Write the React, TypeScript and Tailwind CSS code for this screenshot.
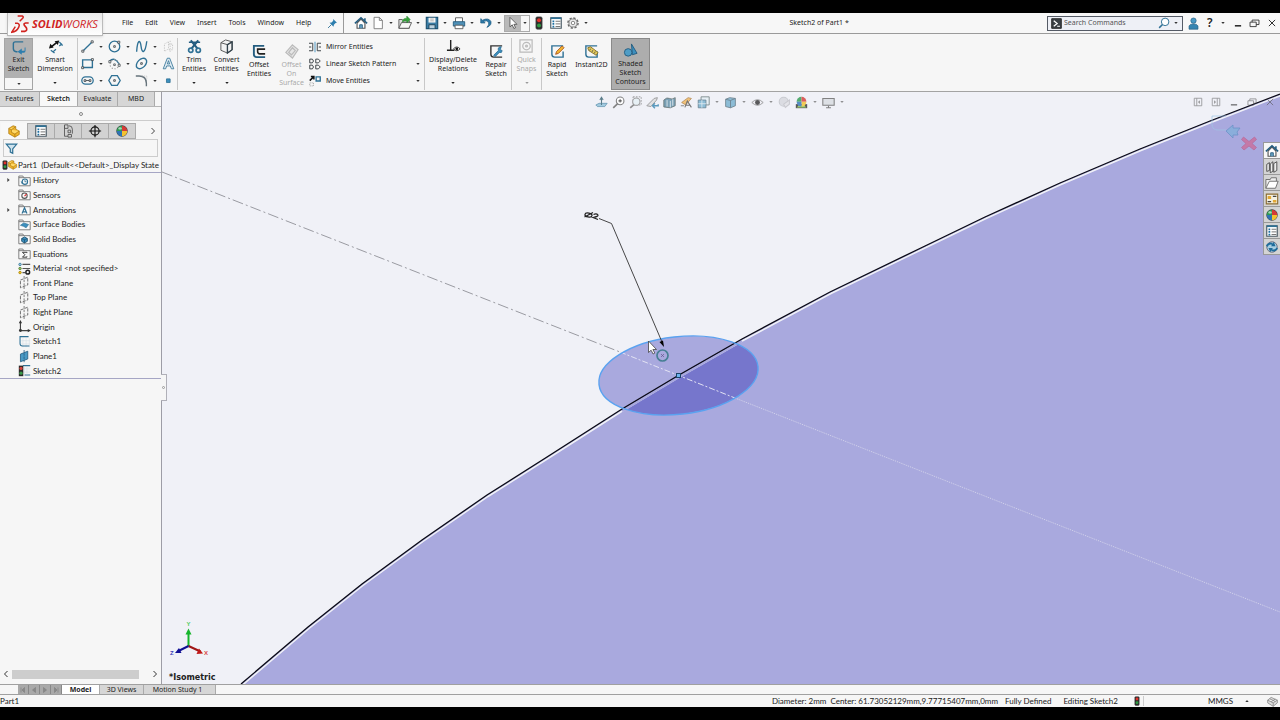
import React from "react";
import type { ReactNode } from "react";

const BLUE = "#2f7195";
const DARK = "#3c4347";

function Ico({ children, className = "size-4", vb = "0 0 16 16" }: { children: ReactNode; className?: string; vb?: string }) {
  return (
    <svg viewBox={vb} className={`shrink-0 ${className}`} fill="none" stroke={BLUE} strokeWidth="1.3" aria-hidden="true">
      {children}
    </svg>
  );
}

function Caret({ className = "text-[#333]", up = false }: { className?: string; up?: boolean }) {
  return (
    <svg viewBox="0 0 5 3" className={`h-[2px] w-1 shrink-0 ${className}`} fill="currentColor" aria-hidden="true">
      <path d={up ? "M0 3h5L2.500 0z" : "M0 0h5L2.500 3z"} />
    </svg>
  );
}

/* ---------- shared drawings ---------- */

const HomeIcon = () => (
  <Ico className="size-[14px]">
    <path d="M3.500 8v6h9V8L8 3.500z" fill="#fff" stroke="#555" />
    <path d="M1 8.500 8 2l7 6.500M12.500 2.500v3" stroke="#245d80" strokeWidth="1.800" />
    <path d="M6.500 14v-4h3v4" fill="#6ba4c4" stroke="#245d80" strokeWidth="1" />
  </Ico>
);
const Ball = ({ className = "size-[14px]" }: { className?: string }) => (
  <Ico className={className}>
    <g stroke="none">
      <circle cx="8" cy="8" r="6.500" fill="#3a3f44" />
      <path d="M8 8V2a6 6 0 0 0-6 6z" fill="#2c9c50" />
      <path d="M8 8V2a6 6 0 0 1 6 6z" fill="#d63a36" />
      <path d="M8 8h6a6 6 0 0 1-6 6z" fill="#f2c230" />
      <path d="M8 8v6a6 6 0 0 1-6-6z" fill="#2f74b5" />
      <ellipse cx="5.800" cy="5" rx="2" ry="1.400" fill="#fff" opacity=".6" />
    </g>
  </Ico>
);
const ListIcon = () => (
  <Ico className="size-[14px]">
    <path d="M2 2h12v12H2z" fill="#fff" stroke="#4a5a64" />
    <path d="M2 2.500h12" stroke={BLUE} strokeWidth="2" />
    <path d="M4 6h2M4 9h2M4 12h2" stroke="#1d6ea0" strokeWidth="2" />
    <path d="M7.500 6H13M7.500 9H13M7.500 12H13" stroke="#666" strokeWidth="1" />
  </Ico>
);
const Traffic = ({ className = "size-[14px]" }: { className?: string }) => (
  <Ico className={className}>
    <rect x="4.500" y="1" width="7" height="14" rx="1.500" fill="#2a2a2a" stroke="#444" strokeWidth=".8" />
    <circle cx="8" cy="4.800" r="2.300" fill="#e0332c" stroke="none" />
    <circle cx="8" cy="10.800" r="2.300" fill="#2f9a42" stroke="none" />
  </Ico>
);
const PartIcon = ({ className = "size-[14px]" }: { className?: string }) => (
  <Ico className={className}>
    <g stroke="#a8740c" strokeWidth=".8">
      <path d="M2 5l5-3 3 1v3l4 2v4l-5 3-7-4z" fill="#f0b429" />
      <path d="M2 5l3 1.500L10 3M5 6.500v3l4 2 5-3.500M9 11.500V15" fill="#ffd867" />
    </g>
  </Ico>
);
const SketchIcon = ({ className = "size-4" }: { className?: string }) => (
  <Ico className={className}>
    <path d="M6 4v11M10 4v11M14 4v11M4 7h11M4 11h11" stroke="#d4dfe6" strokeWidth=".7" />
    <path d="M13 2H2.500v8.500q0 3 3 3H14" />
  </Ico>
);

/* ---------- menu bar ---------- */

const quick: { name: string; icon: ReactNode }[] = [
  {
    name: "New",
    icon: <Ico className="size-[14px]"><path d="M3.500 1.500h6l3.500 3.500v9.500h-9.500zM9.500 1.500V5H13" fill="#fff" stroke="#777" strokeWidth="1" /></Ico>,
  },
  {
    name: "Open",
    icon: (
      <Ico className="size-[14px]">
        <path d="M1 14V4h4l1 1.500h7V14z" fill="#ddd" stroke="#555" strokeWidth="1" />
        <path d="M1 14 4 7.500h11.500L12.500 14z" fill="#f7f7f7" stroke="#555" strokeWidth="1" />
        <path d="M5 7q0-4.500 5-4.500V0l4 4-4 4V5.500Q6.500 5.500 5 7z" fill="#38a33c" stroke="#1f7a27" strokeWidth=".5" />
      </Ico>
    ),
  },
  {
    name: "Save",
    icon: (
      <Ico className="size-[14px]">
        <path d="M1.500 1.500h13v13h-13z" fill="#3b7ea6" stroke="#1d5272" />
        <path d="M4 2h8v5.500H4z" fill="#f4f4f4" stroke="none" />
        <path d="M4.500 14v-4h7v4" fill="#bcd2df" stroke="#1d3f55" strokeWidth="1" />
        <path d="M6 3.500h4M6 5.500h4" stroke="#999" strokeWidth=".8" />
      </Ico>
    ),
  },
  {
    name: "Print",
    icon: (
      <Ico className="size-[14px]">
        <path d="M4 7V2h8v5" fill="#fff" stroke="#555" strokeWidth="1" />
        <path d="M1.500 6.500h13v5h-13z" fill="#4f91b8" stroke="#255c7e" strokeWidth="1" />
        <path d="M3.500 10.500h9v4h-9z" fill="#fff" stroke="#555" strokeWidth="1" />
      </Ico>
    ),
  },
  {
    name: "Undo",
    icon: <Ico className="size-[14px]"><path d="M2 3v5h5L5.300 6.200q3.700-2 5.700 1.300Q12 10 9 13q6-2.500 4.500-7Q10.500 1.500 4 4.800z" fill="#2d79a8" stroke="#1d5b83" strokeWidth=".8" /></Ico>,
  },
];

function MenuBar() {
  return (
    <header className="relative z-10 flex h-[21px] shrink-0 items-center border-b border-[#9a9a9a] bg-[#f7f7f7] pl-[116px]">
      <div className="absolute top-0 left-[7px] flex h-[23px] w-24 items-center border border-t-0 border-[#bbb] bg-gradient-to-b from-[#e9e9e9] to-white px-[3px] shadow-sm">
        <svg viewBox="0 0 54 60" className="h-5 w-[18px] shrink-0" fill="none" stroke="#d1231f" strokeWidth="5" aria-hidden="true">
          <path d="M20 6h14q5 2 1 7l-9 9" strokeWidth="4.500" />
          <path d="M12 28h7q9 2 4 12-6 13-21 15L13 38" strokeWidth="4.500" />
          <path d="M53 27h-9q-7 1-4 7l6 7q4 9-5 11H30" />
        </svg>
        <span className="ml-[3px] font-['Open_Sans',sans-serif] text-[11px] text-[#d1231f] italic"><b>SOLID</b>WORKS</span>
      </div>
      <nav className="flex">
        {["File", "Edit", "View", "Insert", "Tools", "Window", "Help"].map((m) => (
          <button key={m} className="px-[6px]">{m}</button>
        ))}
      </nav>
      <button aria-label="Pin menu" className="ml-[10px]">
        <Ico className="size-[11px]"><path d="m9 1.500 5.500 5.500-2 .3-2.500 2.500-.5 3L3.700 7l3-.5L9 4z" fill="#2d7eae" stroke="none" /><path d="m6.500 9.500-5 5" /></Ico>
      </button>
      <div className="ml-[5px] h-5 w-px bg-[#9a9a9a]" />
      <button aria-label="Home" className="ml-2 flex w-[17px] justify-center"><HomeIcon /></button>
      {quick.map((q) => (
        <button key={q.name} aria-label={q.name} className="flex w-[27px] items-center gap-1 pl-[2px]">
          {q.icon}
          <Caret />
        </button>
      ))}
      <button aria-label="Select" className="flex h-[17px] w-[26px] border border-[#aaa]">
        <span className="flex h-full w-4 items-center justify-center bg-[#b9b9b9]">
          <Ico className="size-[14px]"><path d="M4.500 1.500v11l2.600-2.400 1.900 4.200 1.900-.9L9 9.500h3.500z" fill="#fff" stroke="#555" strokeWidth="1" /></Ico>
        </span>
        <span className="flex h-full flex-1 items-center justify-center"><Caret /></span>
      </button>
      <button aria-label="Rebuild" className="flex w-[17px] justify-center"><Traffic /></button>
      <button aria-label="File properties" className="flex w-[18px] justify-center"><ListIcon /></button>
      <button aria-label="Options" className="flex w-[26px] items-center gap-1 pl-px">
        <Ico className="size-[14px]">
          <circle cx="8" cy="8" r="5.800" stroke="#666" strokeWidth="1.600" strokeDasharray="2.600 1.900" />
          <circle cx="8" cy="8" r="4.600" stroke="#777" strokeWidth="1" fill="#eee" />
          <circle cx="8" cy="8" r="2" stroke="#777" strokeWidth="1" fill="#fff" />
        </Ico>
        <Caret />
      </button>
      <h1 className="flex-1 text-center">Sketch2 of Part1 *</h1>
      <div className="flex h-[15px] w-[136px] items-center border border-[#555b66] bg-[#eef0f6] pr-1 pl-[3px]">
        <Ico className="size-[11px]"><path d="M1 1h14v14H1z" fill="#3b4146" stroke="#222" /><path d="m4 4 5 4-5 4M9 12h4" stroke="#fff" strokeWidth="1.800" /></Ico>
        <input aria-label="Search Commands" placeholder="Search Commands" className="ml-[2px] min-w-0 flex-1 bg-transparent outline-none placeholder:text-[#555]" />
        <button aria-label="Search" className="flex items-center gap-1">
          <Ico className="size-3"><circle cx="9.500" cy="6.500" r="5" fill="#fff" /><path d="m6 10-4.500 4.500" strokeWidth="2" /></Ico>
          <Caret />
        </button>
      </div>
      <button aria-label="Account" className="ml-1">
        <Ico className="size-[13px]"><circle cx="8" cy="4.500" r="3.300" fill="#4a9ac5" stroke="#245d80" strokeWidth=".8" /><path d="M2.500 15V11q1-2.500 5.500-2.500T13.500 11v4z" fill="#3685b1" stroke="#245d80" strokeWidth=".8" /></Ico>
      </button>
      <button aria-label="Help" className="ml-[7px] flex w-[22px] items-center gap-2 text-[12px] font-semibold"><span>?</span><Caret /></button>
      <button aria-label="Minimize" className="flex w-[17px] justify-center"><Ico className="size-[10px]"><path d="M3 12.500h10" stroke="#222" strokeWidth="2.400" /></Ico></button>
      <button aria-label="Restore" className="flex w-[17px] justify-center"><Ico className="size-[11px]"><path d="M1.500 6h9v6.500h-9zM4.500 6V3h10v6.500h-4" stroke="#333" /></Ico></button>
      <button aria-label="Close" className="flex w-[17px] justify-center"><Ico className="size-[10px]"><path d="m3 3 10 10M13 3 3 13" stroke="#333" strokeWidth="1.600" /></Ico></button>
    </header>
  );
}

/* ---------- command ribbon ---------- */

const sketchTools: { name: string; drop: boolean; icon: ReactNode }[] = [
  { name: "Line", drop: true, icon: <><path d="m3 13 10-10" strokeWidth="1.600" /><path d="M1 12.500h2.500V15H1zM12.500 1H15v2.500h-2.500z" fill="#fff" stroke={DARK} strokeWidth="1" /></> },
  { name: "Circle", drop: true, icon: <><circle cx="8" cy="8" r="6.500" strokeWidth="1.600" /><path d="M7 7h2v2H7zM12 1.500h2.500V4H12z" fill="#fff" stroke={DARK} strokeWidth="1" /></> },
  { name: "Spline", drop: true, icon: <path d="M2 14.500C3-1 6.500-1 7.500 8S12.500 17 14.500 1.500" strokeWidth="1.700" /> },
  { name: "3D sketch plane", drop: false, icon: <path d="m3 5 5-3v9l-5 3zM8 5h5v7H8M10 1v14" stroke="#bbb" strokeDasharray="1.500 1.500" strokeWidth="1" /> },
  { name: "Rectangle", drop: true, icon: <><path d="M2 3.500h12v9.500H2z" strokeWidth="1.700" /><path d="M.8 12h2.400v2.400H.800zM12.800 2h2.400v2.400h-2.400z" fill="#fff" stroke={DARK} strokeWidth="1" /></> },
  { name: "Arc", drop: true, icon: <><path d="M2 5q6-6 12 4" strokeWidth="1.600" /><circle cx="8" cy="9" r="5.500" stroke="#999" strokeDasharray="1.500 2" /><path d="M1 4.500h2.500V7H1zM12.500 9H15v2.500h-2.500zM7 8.500h2v2H7z" fill="#fff" stroke={DARK} strokeWidth=".9" /></> },
  { name: "Ellipse", drop: true, icon: <><ellipse cx="8" cy="8" rx="7.500" ry="5" transform="rotate(-45 8 8)" strokeWidth="1.700" /><path d="M7 7h2v2H7z" stroke={DARK} strokeWidth="1" /></> },
  { name: "Sketch text", drop: false, icon: <path d="m1.500 14.500 5-13h3l5 13h-3l-1.200-3.500H5.700l-1.200 3.500zM6.600 8.500h2.800L8 4.500z" strokeWidth="1" fill="#dfeaf1" /> },
  { name: "Slot", drop: true, icon: <><rect x="1" y="3.500" width="14" height="9" rx="4.500" strokeWidth="1.600" /><path d="M3.800 7H6v2.200H3.800zM10 7h2.200v2.200H10zM6 8h4" stroke={DARK} strokeWidth="1" /></> },
  { name: "Polygon", drop: false, icon: <><path d="M4.500 2h7L15 8l-3.500 6h-7L1 8z" strokeWidth="1.600" /><path d="M7 7h2v2H7z" stroke={DARK} strokeWidth="1" /></> },
  { name: "Fillet", drop: true, icon: <><path d="M1 2.500h4q9 0 9 9V15" stroke="#66737b" strokeWidth="1.700" /><path d="M9 2.500h5.500v4" stroke="#aaa" strokeDasharray="1 1.500" strokeWidth="1" /></> },
  { name: "Point", drop: false, icon: <path d="M5.500 6h4.500v4.500H5.500z" fill="#3c8fbe" strokeWidth="1" /> },
];

interface BigProps {
  lines: string[];
  icon: ReactNode;
  width: string;
  drop?: boolean;
  off?: boolean;
  active?: boolean;
}
function Big({ lines, icon, width, drop, off, active }: BigProps) {
  return (
    <button
      disabled={off}
      className={`flex h-[52px] shrink-0 flex-col items-center leading-[9px] ${width} ${drop ? "pt-[1px]" : active ? "pt-1" : "pt-[6px]"} ${off ? "text-[#aaa]" : ""} ${active ? "border border-[#8a8a8a] bg-[#adadad]" : ""}`}
    >
      <Ico className="size-[15px]">{icon}</Ico>
      <span className="mt-px flex flex-col">{lines.map((l) => <span key={l} className="whitespace-nowrap">{l}</span>)}</span>
      {drop && <span className="mt-auto flex pb-[6px]"><Caret className={off ? "text-[#999]" : "text-[#222]"} /></span>}
    </button>
  );
}

const Sep = () => <div className="h-[52px] w-px shrink-0 bg-[#c8c8c8]" />;

const entityRows: { name: string; drop: boolean; icon: ReactNode }[] = [
  { name: "Mirror Entities", drop: false, icon: <><path d="M0 3h5v10H0M16 3h-5v10h5M0 8h3M13 8h3" stroke={DARK} /><path d="M8 1v14" stroke="#3c8fbe" strokeWidth="1.200" /></> },
  { name: "Linear Sketch Pattern", drop: true, icon: <path d="M1 1.500h3.500L6 4 4.500 6.500H1zM9 1.500h3.500L15 4l-2.500 2.500H9zM1 9.500h3.500L6 12l-1.500 2.500H1zM9 9.500h3.500L15 12l-2.500 2.500H9z" stroke={DARK} strokeWidth="1.300" /> },
  { name: "Move Entities", drop: true, icon: <><path d="M9.500 2.500H15V8H9.500z" strokeWidth="1.800" /><path d="m1 7.500 5-5M2.500 2h4v4" stroke="#111" strokeWidth="2" /><path d="M1 10.500h5v4H1z" stroke="#999" strokeDasharray="1.500 1" strokeWidth="1" /></> },
];

function Ribbon() {
  return (
    <div className="flex h-[58px] shrink-0 items-start border-b border-[#a3a3a3] bg-[#f6f6f6] pt-1 pl-1 text-center">
      <button className="flex h-[52px] w-[29px] shrink-0 flex-col items-center border border-[#a5a5a5] leading-[9px]">
        <span className="flex h-[39px] w-full flex-col items-center bg-[#b1b1b1] pt-px">
          <Ico className="size-[15px]">
            <path d="M13 2H4.500q-2 0-2 2v5q0 3 3 3.500H7" strokeWidth="1.500" />
            <path d="M14.500 8v3.500h-3V9L7 12.500l4.500 3.300v-2.300h2q2 0 2-2V8z" fill="#2d7eae" stroke="none" />
          </Ico>
          <span>Exit</span>
          <span>Sketch</span>
        </span>
        <span className="flex flex-1 items-center"><Caret /></span>
      </button>
      <Big width="w-[44px]" drop lines={["Smart", "Dimension"]} icon={<><path d="M3.500 8.500 9.500 3.500" strokeWidth="1.700" stroke="#111" /><path d="m1 10 1.500-5 3.500 4zM12 1.500l-5 1 3.500 4z" fill="#111" stroke="none" /><path d="m5 14 3.500-3M12 7.500l3-2.500M3 12l4 3M12 3l3.500 4" strokeWidth="1.400" /></>} />
      <Sep />
      <div className="grid w-[99px] shrink-0 grid-cols-[27px_27px_27px_18px] grid-rows-[17px_17px_17px]">
        {sketchTools.map((t) => (
          <button key={t.name} aria-label={t.name} className="flex items-center gap-[5px] pl-[3px]">
            <Ico className="size-[13px]">{t.icon}</Ico>
            {t.drop && <Caret />}
          </button>
        ))}
      </div>
      <Sep />
      <Big width="w-[32px]" drop lines={["Trim", "Entities"]} icon={<><path d="M2 3.500h12" stroke="#245d80" strokeWidth="1.600" /><path d="m4 1.500 7.500 9M12 1.500l-7.500 9" stroke="#245d80" strokeWidth="2.200" /><circle cx="4" cy="12" r="2.300" strokeWidth="1.800" /><circle cx="12" cy="12" r="2.300" strokeWidth="1.800" /></>} />
      <Big width="w-[33px]" drop lines={["Convert", "Entities"]} icon={<><path d="m2 4 5-3 7 2v8.500L9 15l-7-3z" fill="#f3f3f3" stroke="#555" strokeWidth="1" /><path d="m2 4 7 2 5-3M9 6v9" stroke="#555" strokeWidth="1" /><path d="M9 6v9l5-3.500V3z" stroke="#33434c" strokeWidth="1.400" /></>} />
      <Big width="w-[32px]" lines={["Offset", "Entities"]} icon={<><path d="M13 2H2v9q0 3 3 3h9" strokeWidth="2" stroke="#245d80" /><path d="M14 5.500H6V8q0 2.500 2.500 2.500H14" stroke="#222" strokeWidth="1.700" /></>} />
      <Big width="w-[33px]" off lines={["Offset", "On", "Surface"]} icon={<path d="m9 1 6 5-6 9-7-6zM9 4l3 3-4 4.500L5 9z" stroke="#bbb" fill="#e6e6e6" />} />
      <div className="flex w-[116px] shrink-0 flex-col">
        {entityRows.map((r) => (
          <button key={r.name} className="flex h-[17px] items-center pr-1 pl-px">
            <Ico className="size-[12px]">{r.icon}</Ico>
            <span className="ml-[5px] flex-1 text-left whitespace-nowrap">{r.name}</span>
            {r.drop && <Caret />}
          </button>
        ))}
      </div>
      <Sep />
      <Big width="w-[56px]" drop lines={["Display/Delete", "Relations"]} icon={<><path d="M5 1v11M1 12h8" stroke="#222" strokeWidth="1.500" /><path d="M8 10.500q3.500-4 7 0-3.500 4-7 0z" stroke="#333" fill="#fff" strokeWidth="1" /><circle cx="11.500" cy="10.500" r="1.500" fill="#111" stroke="none" /></>} />
      <Big width="w-[30px]" lines={["Repair", "Sketch"]} icon={<><path d="M14 2H2v9q0 3 3 3h9" stroke="#333" strokeWidth="1.500" /><path d="m5 12 5-5q-1-4 3-4l-1 3 2 1q0 3-3 2l-4.500 4.500z" fill="#3c8fbe" strokeWidth=".9" /></>} />
      <Sep />
      <Big width="w-[29px]" drop off lines={["Quick", "Snaps"]} icon={<><path d="M1 4V1h13v13H1z" stroke="#bbb" /><circle cx="8" cy="7.500" r="4" stroke="#bbb" /><circle cx="8" cy="7.500" r="1" stroke="#bbb" /></>} />
      <Sep />
      <Big width="w-[30px]" lines={["Rapid", "Sketch"]} icon={<><path d="M14 2H2v9q0 3 3 3h9V8" strokeWidth="1.500" /><path d="m6 11 1-3 6-6 2 2-6 6z" fill="#f2b632" stroke="#a64c18" strokeWidth=".9" /></>} />
      <Big width="w-[39px]" lines={["Instant2D"]} icon={<><path d="M14 2H2v9q0 3 3 3h9V8" strokeWidth="1.500" /><path d="m4 4 3-1 8 6-2 3-8-5z" fill="#e6cb58" stroke="#7b6721" strokeWidth=".9" /><path d="m7 5-1 2M9.500 6.500l-1 2M12 8l-1 2" stroke="#555" strokeWidth=".9" /></>} />
      <Big width="w-[39px]" active lines={["Shaded", "Sketch", "Contours"]} icon={<><path d="m9 1 6 10-5 1.500z" fill="#3c8fbe" stroke="#245d80" strokeWidth="1" /><circle cx="5.500" cy="10" r="4" fill="#4f9dc6" stroke="#245d80" strokeWidth="1" /></>} />
    </div>
  );
}

/* ---------- feature manager ---------- */

const Folder = ({ children }: { children: ReactNode }) => (
  <Ico className="size-[13px]">
    <path d="M1 14.500V2.500h5l1 2h8v10zM1 4.500h6" stroke="#666" strokeWidth="1" fill="#fafafa" />
    {children}
  </Ico>
);
const PlaneIcon = () => (
  <Ico className="size-[13px]"><path d="m3 5 9-3.500V11l-9 3.500z" stroke="#555" strokeWidth="1" strokeDasharray="4 1.500" /><path d="M7.500 0v16" stroke="#666" strokeWidth="1" strokeDasharray="3 1.500" /></Ico>
);

const tree: { name: string; open?: boolean; icon: ReactNode }[] = [
  { name: "History", open: true, icon: <Folder><circle cx="8.500" cy="9.500" r="3.300" /><path d="M8.500 7.500v2h2M5 12l-1-3" strokeWidth="1" /></Folder> },
  { name: "Sensors", icon: <Folder><circle cx="8" cy="9.500" r="3.300" stroke="#555" /><path d="m8 10 2.500-2.500" stroke="#d33" strokeWidth="1.600" /></Folder> },
  { name: "Annotations", open: true, icon: <Folder><path d="M5 13 8 6l3 7M6 10.800h4" strokeWidth="1.500" /></Folder> },
  { name: "Surface Bodies", icon: <Folder><path d="m3 9 4-3 6 2-3 4q-3-2-7-3z" fill="#3c8fbe" strokeWidth=".8" /></Folder> },
  { name: "Solid Bodies", icon: <Folder><path d="m4.500 8 3.500-2 3.500 2v3.500l-3.500 2-3.500-2z" fill="#3c8fbe" strokeWidth="1" stroke="#194a68" /><path d="m4.500 8 3.500 1.500L11.500 8M8 9.500v4" stroke="#194a68" strokeWidth=".8" /></Folder> },
  { name: "Equations", icon: <Folder><path d="M11 7.500V6.500H5.500L8.500 9.500l-3 3H11v-1" stroke="#333" strokeWidth="1.200" /></Folder> },
  { name: "Material <not specified>", icon: <Ico className="size-[13px]"><path d="M5.500 3H15M5.500 8H15M5.500 13H9" stroke="#555" strokeWidth="1.500" /><circle cx="2.500" cy="3" r="1.500" fill="#a9d4e8" strokeWidth="1" /><circle cx="2.500" cy="8" r="1.500" fill="#9c6" stroke="#573" strokeWidth="1" /><circle cx="2.500" cy="13" r="1.500" fill="#f2c230" stroke="#a80" strokeWidth="1" /><circle cx="12" cy="12.500" r="2.300" stroke="#222" strokeWidth="1.800" /></Ico> },
  { name: "Front Plane", icon: <PlaneIcon /> },
  { name: "Top Plane", icon: <PlaneIcon /> },
  { name: "Right Plane", icon: <PlaneIcon /> },
  { name: "Origin", icon: <Ico className="size-[13px]"><path d="M3 3v10h10" stroke="#444" strokeWidth="1.400" /><path d="M3 0 5 4H1zM16 13l-4 2v-4z" fill="#333" stroke="none" /><circle cx="3" cy="13" r="1.800" fill="#333" stroke="none" /></Ico> },
  { name: "Sketch1", icon: <SketchIcon className="size-[13px]" /> },
  { name: "Plane1", icon: <Ico className="size-[13px]"><path d="m3 5 9-3.500V11l-9 3.500z" fill="#4a9ac5" stroke="#245d80" strokeWidth="1" /><path d="M7.500 0v16" stroke="#245d80" strokeWidth="1" strokeDasharray="3 1" /></Ico> },
  { name: "Sketch2", icon: <Ico className="size-[13px]"><path d="M6 2h9M8 13.500h7" /><path d="M8 3v10M11 3v10M6 6h9M6 10h9" stroke="#d4dfe6" strokeWidth=".7" /><rect x="1" y="2" width="5.500" height="13" fill="#2a2a2a" stroke="none" /><circle cx="3.700" cy="5.500" r="2" fill="#d8433c" stroke="none" /><circle cx="3.700" cy="11.300" r="2" fill="#3a9a49" stroke="none" /></Ico> },
];

const panelTabs: { name: string; icon: ReactNode }[] = [
  { name: "Feature tree", icon: <PartIcon /> },
  { name: "Properties", icon: <ListIcon /> },
  { name: "Configurations", icon: <Ico className="size-[14px]"><path d="M4 1h4v4H4zM4 2v12h4M8 7h3v3H8zM8 12h4v3H8zM9 2q4 0 4 4v5" stroke="#555" strokeWidth="1" /></Ico> },
  { name: "Dimensions", icon: <Ico className="size-[14px]"><circle cx="8" cy="8" r="4.700" stroke="#111" /><path d="M8 1v14M1 8h14" stroke="#111" /></Ico> },
  { name: "Display", icon: <Ball /> },
];

function LeftPanel() {
  const tabs: [string, string][] = [["Features", "w-10"], ["Sketch", "w-[38px]"], ["Evaluate", "w-10"], ["MBD", "w-[37px]"]];
  return (
    <aside className="relative flex w-[162px] shrink-0 flex-col border-r border-[#9d9da6] bg-[#f6f6f6]">
      <div className="flex h-[15px] shrink-0 border-b border-[#b5b5b5]">
        {tabs.map(([t, w]) => (
          <button key={t} className={`${w} border-r border-[#aaa] ${t === "Sketch" ? "bg-[#f8f8f8] font-semibold" : "bg-[#d6d6d6]"}`}>{t}</button>
        ))}
      </div>
      <div className="flex h-[14px] shrink-0 items-center justify-center border-b border-[#ccc]"><span className="size-1 rounded-full border border-[#888]" /></div>
      <div className="flex h-[18px] shrink-0 items-end pl-px">
        {panelTabs.map((t, i) => (
          <button key={t.name} aria-label={t.name} className={`flex h-4 w-[27px] items-center justify-center border-r border-[#aaa] ${i === 0 ? "bg-[#f8f8f8]" : "border-y bg-[#d2d2d2]"}`}>{t.icon}</button>
        ))}
        <button aria-label="More tabs" className="ml-auto flex h-4 items-center pr-1"><Ico className="size-[8px]"><path d="m5 2 6 6-6 6" stroke="#444" strokeWidth="2" /></Ico></button>
      </div>
      <div className="mx-[3px] flex h-[18px] shrink-0 items-center border border-[#ccc] pl-px">
        <Ico className="size-[13px]"><path d="M1.500 2.500h13L9.500 8.500V14l-3-1.500v-4z" fill="#cfe3ee" strokeWidth="1.500" /></Ico>
        <input aria-label="Filter tree" className="min-w-0 flex-1 bg-transparent outline-none" />
      </div>
      <div className="flex h-4 shrink-0 items-center overflow-hidden border-b border-[#a6a6c4] font-['Lato',sans-serif] text-[8px] whitespace-pre">
        <Traffic className="size-[10px]" />
        <PartIcon className="-ml-[3px] size-[11px]" />
        <span>{"Part1  (Default<<Default>_Display State"}</span>
      </div>
      <ul className="grid h-[206px] shrink-0 auto-rows-fr border-b border-[#a6a6c4] font-['Lato',sans-serif] text-[8px]">
        {tree.map((n) => (
          <li key={n.name} className="flex items-center">
            <span className="flex w-[18px] pl-[7px]">
              {n.open && <svg viewBox="0 0 3 5" className="h-1 w-[3px]" fill="#444" aria-hidden="true"><path d="M0 0v5l3-2.500z" /></svg>}
            </span>
            <button className="flex items-center gap-[2px] whitespace-nowrap">{n.icon}{n.name}</button>
          </li>
        ))}
      </ul>
      <div className="mt-auto flex h-[14px] shrink-0 items-start gap-[2px] pr-[2px] pl-[2px]">
        <Ico className="size-[8px]"><path d="m11 2-6 6 6 6" stroke="#333" strokeWidth="2" /></Ico>
        <div className="h-[9px] w-[127px] bg-[#cdcdcd]" />
        <Ico className="ml-auto size-[8px]"><path d="m5 2 6 6-6 6" stroke="#333" strokeWidth="2" /></Ico>
      </div>
      <div className="absolute top-[282px] -right-[6px] z-10 flex h-[27px] w-[6px] items-center justify-center border border-l-0 border-[#b0b0b8] bg-[#f6f6f6]"><span className="size-[3px] rounded-full border border-[#999]" /></div>
    </aside>
  );
}

/* ---------- graphics area ---------- */

const edge = "241,684 308,627 362,584 422,540 487,495 547,457 622,409 679,375 742,339 830,292 925,246 985,217 1060,183 1140,149 1210,121 1280,94";

function Scene() {
  return (
    <svg viewBox="162 92 1118 592" preserveAspectRatio="xMidYMid slice" className="absolute inset-0 size-full" aria-hidden="true">
      <defs>
        <clipPath id="face"><polygon points={`${edge} 1280,684`} /></clipPath>
      </defs>
      <rect x="162" y="92" width="1118" height="592" fill="#f0f1f7" />
      <polygon points={`${edge} 1280,684`} fill="#a9a9de" />
      <ellipse cx="678.500" cy="375.500" rx="80" ry="38.700" transform="rotate(-6.500 678.500 375.500)" fill="#a9a9de" />
      <g clipPath="url(#face)">
        <ellipse cx="678.500" cy="375.500" rx="80" ry="38.700" transform="rotate(-6.500 678.500 375.500)" fill="#7676cc" />
        <polyline points={edge} transform="translate(1 1.500)" fill="none" stroke="#f0f1f7" strokeWidth="1.500" />
        <path d="M622 411 679 377 742 341" stroke="#a9a9de" strokeWidth="2.500" fill="none" />
      </g>
      <path d="M162 172 620 352" stroke="#9a9ba2" strokeWidth="1" strokeDasharray="11 3 2 3" />
      <path d="m620 352 115 46" stroke="#e3e3f4" strokeWidth="1" strokeDasharray="6 2 2 2" />
      <path d="m735 398 545 214" stroke="#d4d4ec" strokeWidth="1" strokeDasharray="1 1" />
      <polyline points={edge} fill="none" stroke="#0a0a14" strokeWidth="1.300" />
      <ellipse cx="678.500" cy="375.500" rx="80" ry="38.700" transform="rotate(-6.500 678.500 375.500)" fill="none" stroke="#5aa2f0" strokeWidth="1.400" />
      <path d="M599 218.500 611.500 223.500 662 342" stroke="#333" strokeWidth=".9" fill="none" />
      <path d="m664 347-4.500-5 3.500-1.500z" fill="#000" />
      <g stroke="#222" strokeWidth="1.200" fill="none">
        <ellipse cx="588.500" cy="215" rx="3.600" ry="2" transform="rotate(12 588.500 215)" />
        <path d="m584.500 217 8.500-4.500M593.500 214.500q3-1.500 4.500.5.500 1.500-5 2.500l5 2" />
      </g>
      <rect x="676.500" y="373.500" width="4" height="4" fill="#6fb4ee" stroke="#1b4467" strokeWidth="1" />
      <path d="M648.500 341v11.500l2.600-2.300 2 3.800 1.700-.9-1.900-3.600h3.600z" fill="#fff" stroke="#444" strokeWidth=".8" />
      <circle cx="662.500" cy="355.500" r="5.500" fill="none" stroke="#477f94" strokeWidth="1.700" />
      <path d="m661 354 3 3M664 354l-3 3" stroke="#65518c" strokeWidth=".7" />
      <g strokeWidth="2">
        <path d="M188.500 646v-14" stroke="#15b52b" />
        <path d="m188.500 646 12 5.500" stroke="#a01515" />
        <path d="m188.500 646-10 5" stroke="#101094" />
      </g>
      <path d="m188.500 628.500 3 6h-6z" fill="#15b52b" />
      <path d="m203 653.500-6.500.500 2.500-5.500z" fill="#c01818" />
      <path d="m175 653 4-5 2.500 5z" fill="#101094" />
      <g fontFamily="Liberation Sans, sans-serif" fontSize="6" fontWeight="bold">
        <text x="186.500" y="626" fill="#4fca5c">Y</text>
        <text x="204" y="655" fill="#d84444">X</text>
        <text x="170" y="655" fill="#3a3ab8">Z</text>
      </g>
      <path d="M1212 116v8q0 6 6 6h8M1212 116h14" stroke="#9fc5e4" fill="none" opacity=".7" />
      <path d="m1226 131 7-6v3h7l-3 4 1 3h-5v3z" fill="#8aaedb" stroke="#6d92c8" strokeWidth=".8" />
      <path transform="translate(0 -1)" d="m1243.500 138 5.500 4.500 5.500-4.500 2 2.500-4.500 4 4.500 4-2.500 2.500-5-4-5 4-2.500-2.500 4.500-4-4.500-4z" fill="#c479a8" stroke="#b56d9f" strokeWidth=".8" />
    </svg>
  );
}

const Box3 = ({ fill = "#74b0cf" }: { fill?: string }) => (
  <><path d="m2 4 5-2 7 1v9l-6 2.500-6-1.500z" fill={fill} stroke="#4a6270" strokeWidth="1" /><path d="m2 4 6 1.500L14 3M8 5.500v9" stroke="#4a6270" strokeWidth="1" /></>
);

const views: { name: string; drop?: boolean; icon: ReactNode }[] = [
  { name: "Normal to", icon: <><path d="m1 11 4-2h10l-3 4H3z" fill="#8fc1da" strokeWidth=".8" /><path d="M8 11V2M6 5l2-3.500L10 5" stroke="#35606f" /></> },
  { name: "Zoom to fit", icon: <><circle cx="10" cy="6" r="4.700" fill="#fff" stroke="#666" /><path d="m7 9.500-5.500 5" stroke="#666" strokeWidth="2" /><path d="M8 6h4M10 4v4" stroke="#333" /></> },
  { name: "Zoom to area", icon: <><path d="M5 1h10v10H5z" stroke="#777" strokeDasharray="2 1.500" strokeWidth="1" /><circle cx="9" cy="7" r="4.500" fill="#e6f0f5" stroke="#888" /><path d="m6 10.500-4.500 4" stroke="#777" strokeWidth="2" /></> },
  { name: "Previous view", icon: <><path d="m1 12 9-9 4-1-1 3-7 8z" fill="#ddd" stroke="#777" strokeWidth="1" /><path d="M15 10v2H9M11 9l-3 3 3 3" stroke="#3685b1" strokeWidth="1.700" /></> },
  { name: "Section view", icon: <><path d="M1 5q4-4 7-2t7-1v10l-6 2.500-8-1z" fill="#5c8ca5" stroke="#455" strokeWidth="1" /><path d="M5 5v8M9 6v8M12 4v8" stroke="#e8eef2" strokeWidth="1" /></> },
  { name: "Dynamic annotation", icon: <><path d="m2 8 8-6 4 1-7 8z" fill="#f0b65a" stroke="#985f16" strokeWidth=".8" /><path d="m6 14 3-8 5 8M7.500 11.500h5" stroke="#555" /><path d="M1 12h4" stroke="#777" /></> },
  { name: "View orientation", drop: true, icon: <><path d="M5 1h10v10H5z" fill="#e5eff5" strokeWidth="1" stroke="#566" /><path d="M1.500 5H11v9.500H1.500z" fill="#74b0cf" stroke="#48687a" strokeWidth="1" /><path d="M1.500 9.500H11M6 5v9.500" stroke="#dfeaf0" strokeWidth="1" /></> },
  { name: "Display style", drop: true, icon: <Box3 /> },
  { name: "Hide or show items", drop: true, icon: <><path d="M1 8q7-7 14 0-7 7-14 0z" fill="#ececf2" stroke="#777" strokeWidth="1" /><circle cx="8" cy="8" r="3" fill="#333" stroke="none" /></> },
  { name: "Edit appearance", icon: <><circle cx="7" cy="7" r="5.500" fill="#d6d8de" stroke="#c0c2c8" /><path d="m7 10 7-5v5l-5 4z" fill="#e2e2e6" stroke="#c0c0c6" /></> },
  { name: "Apply scene", drop: true, icon: <><path d="M1 10h14v5H1z" fill="#333" stroke="none" /><path d="M2 14l3-3h6l3 3z" fill="#8bc34a" stroke="none" /><g stroke="none"><path d="M8 7V1a6 6 0 0 0-6 6z" fill="#2c9c50" /><path d="M8 7V1a6 6 0 0 1 6 6z" fill="#d63a36" /><path d="M8 7h6a6 6 0 0 1-6 6z" fill="#f2c230" /><path d="M8 7v6a6 6 0 0 1-6-6z" fill="#2f74b5" /></g></> },
  { name: "View settings", drop: true, icon: <><path d="M1 3h14v8.500H1z" fill="#d9dde1" stroke="#666" /><path d="M8 12v2M5 14.500h6" stroke="#666" /></> },
];

const taskPane: { name: string; icon: ReactNode }[] = [
  { name: "Resources", icon: <HomeIcon /> },
  { name: "Design library", icon: <Ico className="size-[14px]"><path d="m2 5 3-2v9l-3 1zM6 4.500 9 2v11l-3 1.500zM10 4l3.500-2v10L10 14z" stroke="#444" fill="#eee" strokeWidth="1" /></Ico> },
  { name: "File explorer", icon: <Ico className="size-[14px]"><path d="M1 14V4h5l1-2h6v4" stroke="#666" fill="#eee" strokeWidth="1" /><path d="m1 14 4-8h10l-3 8z" fill="#fff" stroke="#666" strokeWidth="1" /></Ico> },
  { name: "View palette", icon: <Ico className="size-[14px]"><path d="M1.500 2.500h13v11h-13z" fill="#f4f1e2" stroke="#8b6d35" /><path d="M3 4.500h4V8H3zM9 9h4v3H9z" fill="#e2a836" stroke="none" /><path d="M3 11h4M9 5h4" stroke="#444" /></Ico> },
  { name: "Appearances", icon: <Ball /> },
  { name: "Custom properties", icon: <ListIcon /> },
  { name: "Forum", icon: <Ico className="size-[14px]"><circle cx="8" cy="8" r="6" fill="#a9cfe2" stroke="#667" strokeWidth="1" /><path d="M1 6q4-5 8-2l1-2 2 5H7l1-1.500Q4 4 3 8zM15 10q-4 5-8 2l-1 2-2-5h5l-1 1.500q4 1.500 5-2z" fill="#1f6c9b" stroke="none" /></Ico> },
];

function Viewport() {
  return (
    <main className="relative flex min-w-0 flex-1 flex-col overflow-hidden">
      <Scene />
      <div className="absolute top-[3px] left-[431px] flex">
        {views.map((v) => (
          <button key={v.name} aria-label={v.name} className={`flex h-[14px] items-center gap-[5px] pl-[2px] opacity-80 ${v.drop ? "w-[27px]" : "w-[17px]"}`}>
            <Ico className="size-[13px]">{v.icon}</Ico>
            {v.drop && <Caret className="text-[#777]" />}
          </button>
        ))}
      </div>
      <div className="absolute top-[5px] right-[5px] flex gap-[8px] opacity-60">
        <button aria-label="Collapse left"><Ico className="size-[10px]"><path d="M2 2h12v12H2zM6 2v12" stroke="#555" /><path d="m11 5-3 3 3 3z" fill="#555" stroke="none" /></Ico></button>
        <button aria-label="Collapse right"><Ico className="size-[10px]"><path d="M2 2h12v12H2zM10 2v12" stroke="#555" /><path d="m5 5 3 3-3 3z" fill="#555" stroke="none" /></Ico></button>
        <button aria-label="Minimize document"><Ico className="size-[10px]"><path d="M3 12.500h10" stroke="#333" strokeWidth="2.400" /></Ico></button>
        <button aria-label="Restore document"><Ico className="size-[10px]"><path d="M1.500 6h9v7h-9zM4.500 6V3h10v7h-4" stroke="#444" /></Ico></button>
        <button aria-label="Close document"><Ico className="size-[10px]"><path d="m3 3 10 10M13 3 3 13" stroke="#555" strokeWidth="1.600" /></Ico></button>
      </div>
      <div className="absolute top-[50px] right-0 flex w-[17px] flex-col border-t border-l border-[#999]">
        {taskPane.map((t, i) => (
          <button key={t.name} aria-label={t.name} className={`flex h-4 items-center justify-center border-b border-[#999] ${i === 0 ? "bg-[#f7f7f7]" : "bg-[#d4d4d4]"}`}>{t.icon}</button>
        ))}
      </div>
      <span className="relative mt-auto pl-[7px] font-['DejaVu_Sans',sans-serif] text-[8px] leading-[12px] font-bold text-[#222]">*Isometric</span>
    </main>
  );
}

/* ---------- footer ---------- */

function Footer() {
  const nav = ["M11 3 6 8l5 5zM4 3v10", "M11 3 5 8l6 5z", "m5 3 6 5-6 5z", "m5 3 5 5-5 5zM12 3v10"];
  return (
    <footer className="shrink-0 bg-[#f6f6f6]">
      <div className="flex h-[11px] border-y border-[#a0a0a0] pl-[18px] leading-[9px]">
        {nav.map((d, i) => (
          <button key={d} aria-label={`Tab scroll ${i + 1}`} className="flex w-[11px] items-center justify-center border-r border-[#888] bg-[#a9a9a9]">
            <Ico className="size-2"><path d={d} fill="#888" stroke="#808080" /></Ico>
          </button>
        ))}
        <button className="w-[37px] bg-white font-bold">Model</button>
        <button className="w-[45px] border-x border-[#aaa] bg-[#d6d6d6]">3D Views</button>
        <button className="w-[72px] border-r border-[#aaa] bg-[#d6d6d6] pr-1">Motion Study 1</button>
      </div>
      <div className="flex h-3 items-center font-['Lato',sans-serif] text-[8px] leading-[12px] whitespace-nowrap">
        <span>Part1</span>
        <span className="ml-auto">Diameter: 2mm</span>
        <span className="ml-1">Center: 61.73052129mm,9.77715407mm,0mm</span>
        <span className="ml-[7px]">Fully Defined</span>
        <span className="ml-3">Editing Sketch2</span>
        <Traffic className="ml-[14px] size-[10px]" />
        <span className="ml-[1px] h-[10px] w-px bg-[#ccc]" />
        <button className="ml-16 flex items-center gap-3">MMGS<Caret up /></button>
        <Ico className="mr-[2px] ml-[18px] size-[11px]"><path d="m1 6 5-4 9 4v4l-6 5-8-5zM1 6l8 4 6-4M9 10v5M4 4l8 4M6 8.500l6-4" stroke="#777" fill="#ddd" strokeWidth="1" /></Ico>
      </div>
    </footer>
  );
}

export default function App() {
  return (
    <div className="flex h-screen flex-col bg-black py-[13px] font-['Noto_Sans',sans-serif] text-[7px] leading-[10px] text-[#222]">
      <MenuBar />
      <Ribbon />
      <div className="flex min-h-0 flex-1">
        <LeftPanel />
        <Viewport />
      </div>
      <Footer />
    </div>
  );
}
